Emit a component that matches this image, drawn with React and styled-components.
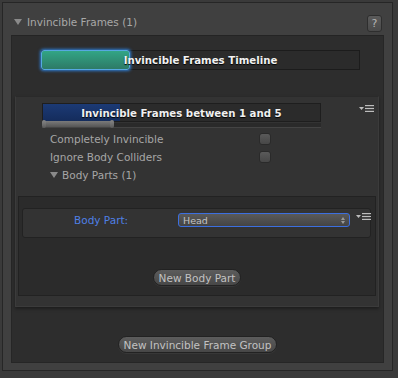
import React from "react"
import styled, { createGlobalStyle } from "styled-components"

const GlobalStyle = createGlobalStyle`
  body {
    margin: 0;
    background: #3a3a3a;
    font-family: "DejaVu Sans", "Liberation Sans", sans-serif;
  }
`

const Frame = styled.div`
  margin: 2px 3px 0 2px;
  width: 391px;
  height: 369px;
  box-sizing: border-box;
  border: 1px solid #262626;
  background: #404040;
  display: flex;
  flex-direction: column;
`

const Header = styled.div`
  height: 32px;
  box-sizing: border-box;
  padding: 5px 10px 0 11px;
  display: flex;
  align-items: center;
  color: #a8a8a8;
  font-size: 10.5px;
  gap: 3px;
`

const Arrow = styled.span`
  width: 0;
  height: 0;
  border-left: ${(p) => p.$size}px solid transparent;
  border-right: ${(p) => p.$size}px solid transparent;
  border-top: ${(p) => p.$size * 1.7}px solid #8a8a8a;
  margin-right: 2px;
`

const Title = styled.span`
  flex: 1;
`

const HelpButton = styled.div`
  width: 15px;
  height: 17px;
  border-radius: 3px;
  background: linear-gradient(#5a5a5a, #4a4a4a);
  border: 1px solid #2e2e2e;
  color: #b4b4b4;
  font-size: 11px;
  display: flex;
  align-items: center;
  justify-content: center;
  box-sizing: border-box;
  margin-top: 3px;
`

const InnerPanel = styled.div`
  margin: 0 8px 0 8px;
  height: 328px;
  background: #2d2d2d;
  border: 1px solid #262626;
  border-top-color: #242424;
  box-sizing: border-box;
  display: flex;
  flex-direction: column;
`

const TimelineRow = styled.div`
  padding: 14px 0 0 29px;
  height: 20px;
`

const TimelineBar = styled.div`
  position: relative;
  width: 319px;
  height: 20px;
  border: 1px solid #1c1c1c;
  box-sizing: border-box;
  background: #2b2b2b;
  display: flex;
  align-items: center;
  justify-content: center;
  color: #f2f2f2;
  font-weight: bold;
  font-size: 10.2px;
`

const Progress = styled.div`
  position: absolute;
  left: -1px;
  top: -1px;
  width: 89px;
  height: 20px;
  border-radius: 3px;
  background: linear-gradient(#32a585, #2d7a66);
  border: 1px solid #56a8e0;
  box-shadow: 0 0 3px 1px #2e7bd0;
  box-sizing: border-box;
`

const BarText = styled.span`
  position: relative;
  padding-top: 1px;
  text-shadow: 0 1px 1px #000;
`

const SubPanel = styled.div`
  margin: 26px 4px 0 3px;
  height: 211px;
  background: #333333;
  border: 1px solid #3b3b3b;
  border-top-color: #2a2a2a;
  box-shadow: 0 2px 3px rgba(0, 0, 0, 0.35);
  box-sizing: border-box;
  position: relative;
  display: flex;
  flex-direction: column;
`

const MenuIcon = styled.div`
  position: absolute;
  right: ${(p) => p.$right}px;
  top: ${(p) => p.$top}px;
  display: flex;
  align-items: center;
  gap: 1px;
`

const RangeBlock = styled.div`
  padding: 6px 0 0 26px;
`

const RangeBar = styled.div`
  position: relative;
  width: 279px;
  height: 19px;
  background: #2b2b2b;
  border: 1px solid #1e1e1e;
  box-sizing: border-box;
  display: flex;
  align-items: center;
  justify-content: center;
  color: #f0f0f0;
  font-weight: bold;
  font-size: 10.2px;
`

const RangeFill = styled.div`
  position: absolute;
  left: 0;
  top: 0;
  bottom: 0;
  width: 77px;
  background: linear-gradient(#1c3a75, #142c5c);
`

const Track = styled.div`
  position: relative;
  width: 279px;
  height: 4px;
  margin-top: 1px;
  background: #2a2a2a;
  border-bottom: 1px solid #444;
`

const TrackFill = styled.div`
  position: absolute;
  left: 0;
  top: -2px;
  width: 72px;
  height: 6px;
  border-radius: 3px;
  background: linear-gradient(#7a7a7a, #555);
`

const Thumb = styled.div`
  position: absolute;
  top: -3px;
  left: ${(p) => p.$left}px;
  width: 4px;
  height: 8px;
  border-radius: 2px;
  background: linear-gradient(#888, #5a5a5a);
`

const Fields = styled.div`
  padding: 2px 0 0 34px;
  display: flex;
  flex-direction: column;
`

const FieldRow = styled.div`
  height: 18px;
  display: flex;
  align-items: center;
  color: #a6a6a6;
  font-size: 10.5px;
`

const FieldLabel = styled.span`
  width: 209px;
`

const Checkbox = styled.div`
  width: 12px;
  height: 12px;
  border-radius: 3px;
  background: linear-gradient(#5a5a5a, #474747);
  border: 1px solid #2a2a2a;
  box-sizing: border-box;
`

const Foldout = styled.div`
  display: flex;
  align-items: center;
  gap: 2px;
`

const ListBox = styled.div`
  margin: 12px 2px 0 2px;
  height: 100px;
  background: #2b2b2b;
  border: 1px solid #222;
  box-sizing: border-box;
  display: flex;
  flex-direction: column;
  align-items: center;
`

const ItemRow = styled.div`
  position: relative;
  align-self: stretch;
  margin: 11px 4px 0 3px;
  height: 30px;
  background: #333;
  border: 1px solid #222;
  border-radius: 3px;
  box-sizing: border-box;
  display: flex;
  align-items: center;
  padding-bottom: 6px;
`

const ItemLabel = styled.span`
  color: #4f80e6;
  font-size: 10.5px;
  width: 155px;
  padding-left: 51px;
  box-sizing: border-box;
`

const Select = styled.div`
  width: 172px;
  height: 14px;
  border-radius: 3px;
  border: 1px solid #3c6fe0;
  background: linear-gradient(#5a5a5a, #444);
  box-sizing: border-box;
  display: flex;
  align-items: center;
  justify-content: space-between;
  padding: 0 4px;
  color: #c4c4c4;
  font-size: 9.5px;
`

const Stepper = styled.span`
  display: flex;
  flex-direction: column;
  gap: 1px;
`

const StepArrow = styled.span`
  width: 0;
  height: 0;
  border-left: 2px solid transparent;
  border-right: 2px solid transparent;
  ${(p) => (p.$up ? "border-bottom" : "border-top")}: 3px solid #9a9a9a;
`

const PillButton = styled.div`
  margin-top: ${(p) => p.$top}px;
  height: 17px;
  padding: 0 5px;
  border-radius: 9px;
  background: linear-gradient(#5c5c5c, #474747);
  border: 1px solid #222;
  box-shadow: 0 1px 0 rgba(255, 255, 255, 0.05);
  box-sizing: border-box;
  display: flex;
  align-items: center;
  color: #c2c2c2;
  font-size: 10.5px;
  align-self: center;
`

const Menu = ({ right, top }) => (
  <MenuIcon $right={right} $top={top}>
    <svg width="5" height="3" viewBox="0 0 5 3">
      <path d="M0 0 H5 L2.5 3 Z" fill="#bdbdbd" />
    </svg>
    <svg width="9" height="7" viewBox="0 0 9 7">
      <rect x="0" y="0" width="9" height="1.2" fill="#bdbdbd" />
      <rect x="0" y="2.9" width="9" height="1.2" fill="#bdbdbd" />
      <rect x="0" y="5.8" width="9" height="1.2" fill="#bdbdbd" />
    </svg>
  </MenuIcon>
)

export default function App() {
  return (
    <>
      <GlobalStyle />
      <Frame>
        <Header>
          <Arrow $size={4} />
          <Title>Invincible Frames (1)</Title>
          <HelpButton>?</HelpButton>
        </Header>
        <InnerPanel>
          <TimelineRow>
            <TimelineBar>
              <Progress />
              <BarText>Invincible Frames Timeline</BarText>
            </TimelineBar>
          </TimelineRow>
          <SubPanel>
            <Menu right={4} top={8} />
            <RangeBlock>
              <RangeBar>
                <RangeFill />
                <BarText>Invincible Frames between 1 and 5</BarText>
              </RangeBar>
              <Track>
                <TrackFill />
                <Thumb $left={0} />
                <Thumb $left={68} />
              </Track>
            </RangeBlock>
            <Fields>
              <FieldRow>
                <FieldLabel>Completely Invincible</FieldLabel>
                <Checkbox />
              </FieldRow>
              <FieldRow>
                <FieldLabel>Ignore Body Colliders</FieldLabel>
                <Checkbox />
              </FieldRow>
              <FieldRow>
                <Foldout>
                  <Arrow $size={4} />
                  Body Parts (1)
                </Foldout>
              </FieldRow>
            </Fields>
            <ListBox>
              <ItemRow>
                <ItemLabel>Body Part:</ItemLabel>
                <Select>
                  Head
                  <Stepper>
                    <StepArrow $up />
                    <StepArrow />
                  </Stepper>
                </Select>
                <Menu right={-1} top={4} />
              </ItemRow>
              <PillButton $top={31}>New Body Part</PillButton>
            </ListBox>
          </SubPanel>
          <PillButton $top={29}>New Invincible Frame Group</PillButton>
        </InnerPanel>
      </Frame>
    </>
  )
}
